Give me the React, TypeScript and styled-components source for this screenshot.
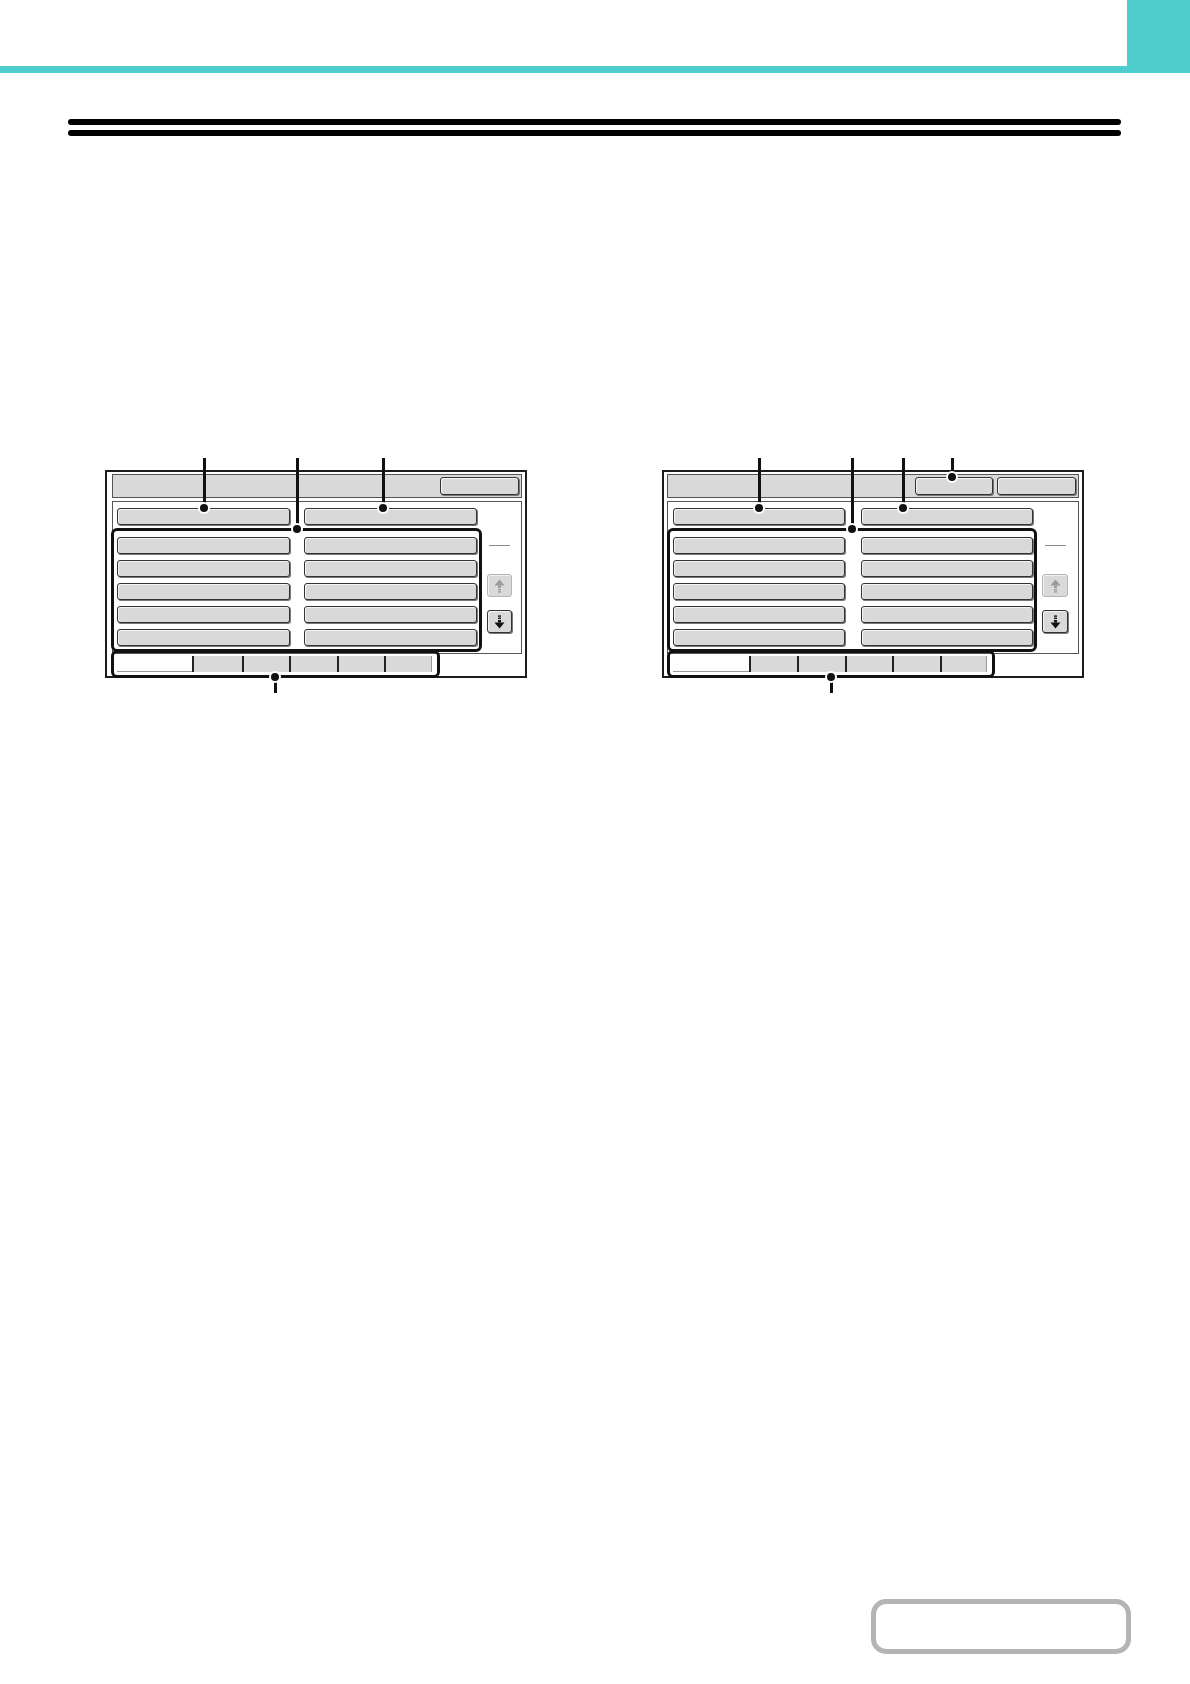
import React from "react";
import styled, { createGlobalStyle, css } from "styled-components";

const TEAL = "#4fcdcd";
const GRAY = "#d9d9d9";

const GlobalStyle = createGlobalStyle`
  html, body { margin: 0; padding: 0; background: #ffffff; }
  body { font-family: "Liberation Sans", Arial, sans-serif; }
  * { box-sizing: border-box; }
`;

const Page = styled.div`
  width: 1190px;
  min-height: 1684px;
  display: flex;
  flex-direction: column;
  background: #ffffff;
`;

const Header = styled.header`
  display: flex;
  height: 73px;
`;

const HeaderMain = styled.div`
  flex: 1;
  border-bottom: 7px solid ${TEAL};
`;

const HeaderTab = styled.div`
  width: 63px;
  background: ${TEAL};
`;

const Rule = styled.div`
  margin: 46px 0 0 68px;
  width: 1053px;
  display: flex;
  flex-direction: column;
  gap: 5px;
`;

const RuleBar = styled.div`
  height: 6px;
  background: #000;
  border-radius: 3px;
`;

const Figures = styled.section`
  display: flex;
  margin-top: 322px;
  padding-left: 105px;
  gap: 135px;
`;

const Figure = styled.figure<{ $w: number }>`
  position: relative;
  margin: 0;
  padding: 12px 0 16px;
  width: ${(p) => p.$w}px;
`;

const Frame = styled.div<{ $padL: number }>`
  height: 208px;
  border: 2px solid #1c1c1c;
  padding: 2px 3px 0 ${(p) => p.$padL}px;
  display: flex;
  flex-direction: column;
`;

const buttonLook = css`
  background: ${GRAY};
  border: 1px solid #333;
  border-radius: 3px;
  box-shadow: inset 1px 1px 0 #f4f4f4, 1px 1px 0 #777;
`;

const TitleBar = styled.div<{ $padR: number }>`
  height: 24px;
  background: ${GRAY};
  border: 1px solid #555;
  display: flex;
  justify-content: flex-end;
  align-items: center;
  gap: 4px;
  padding-right: ${(p) => p.$padR}px;
`;

const TitleButton = styled.div<{ $w: number }>`
  ${buttonLook};
  width: ${(p) => p.$w}px;
  height: 18px;
`;

const Panel = styled.div`
  margin-top: 3px;
  height: 153px;
  border: 1px solid #555;
  display: flex;
  align-items: flex-start;
`;

const MainCol = styled.div`
  padding-top: 6px;
  display: flex;
  flex-direction: column;
`;

const HeaderRow = styled.div<{ $pad: number; $gap: number }>`
  display: flex;
  gap: ${(p) => p.$gap}px;
  padding-left: ${(p) => p.$pad}px;
`;

const KeyButton = styled.div<{ $w: number }>`
  ${buttonLook};
  width: ${(p) => p.$w}px;
  height: 17px;
`;

const ListGroup = styled.div<{ $ml: number; $w: number; $gap: number; $pl: number; $pr: number }>`
  margin: 3px 0 0 ${(p) => p.$ml}px;
  border: 3px solid #111;
  border-radius: 6px;
  padding: 6px ${(p) => p.$pr}px 3px ${(p) => p.$pl}px;
  display: grid;
  grid-template-columns: ${(p) => p.$w}px ${(p) => p.$w}px;
  column-gap: ${(p) => p.$gap}px;
  row-gap: 6px;
`;

const ScrollCol = styled.div<{ $w: number }>`
  margin-left: 5px;
  width: ${(p) => p.$w}px;
  padding-top: 43px;
  display: flex;
  flex-direction: column;
  align-items: center;
`;

const ScrollRule = styled.div`
  width: 21px;
  height: 1px;
  background: #8a8a8a;
`;

const ScrollButton = styled.div<{ $disabled?: boolean; $mt: number }>`
  margin-top: ${(p) => p.$mt}px;
  width: 100%;
  height: 23px;
  border-radius: 3px;
  display: flex;
  align-items: center;
  justify-content: center;
  background: ${GRAY};
  ${(p) =>
    p.$disabled
      ? css`
          border: 1px solid #b5b5b5;
          box-shadow: inset 1px 1px 0 #f2f2f2;
        `
      : css`
          border: 1px solid #333;
          box-shadow: inset 1px 1px 0 #f4f4f4, 1px 1px 0 #777;
        `}
`;

const TabRow = styled.div<{ $ml: number; $ringR: number }>`
  position: relative;
  margin: 2px 0 0 ${(p) => p.$ml}px;
  height: 16px;
  display: flex;
  align-self: flex-start;
  &::after {
    content: "";
    position: absolute;
    left: -6px;
    top: -6px;
    right: -${(p) => p.$ringR}px;
    bottom: -6px;
    border: 3px solid #111;
    border-radius: 6px;
    pointer-events: none;
  }
`;

const Tab = styled.div<{ $w: number; $active?: boolean; $last?: boolean }>`
  width: ${(p) => p.$w}px;
  height: 100%;
  ${(p) =>
    p.$active
      ? css`
          background: #ffffff;
          border-bottom: 1px solid #9a9a9a;
        `
      : css`
          background: ${GRAY};
          border-left: 2px solid #222;
        `}
  ${(p) =>
    p.$last &&
    css`
      border-right: 1px solid #999;
    `}
`;

const Leader = styled.div<{ $x: number; $top: number; $h: number }>`
  position: absolute;
  left: ${(p) => p.$x - 1.5}px;
  top: ${(p) => p.$top}px;
  width: 3px;
  height: ${(p) => p.$h}px;
  background: #111;
`;

const Dot = styled.div<{ $x: number; $y: number }>`
  position: absolute;
  left: ${(p) => p.$x - 4}px;
  top: ${(p) => p.$y - 4}px;
  width: 8px;
  height: 8px;
  border-radius: 50%;
  background: #111;
  box-shadow: 0 0 0 2px #ffffff;
`;

const Footer = styled.footer`
  margin-top: auto;
  padding: 0 59px 30px 0;
  display: flex;
  justify-content: flex-end;
`;

const NavButton = styled.div`
  width: 260px;
  height: 55px;
  border: 5px solid #b4b4b4;
  border-radius: 15px;
  background: #ffffff;
`;

const ArrowIcon: React.FC<{ dir: "up" | "down"; color: string }> = ({ dir, color }) => (
  <svg
    width="11"
    height="14"
    viewBox="0 0 11 14"
    style={{ transform: dir === "down" ? "rotate(180deg)" : undefined }}
  >
    <polygon points="5.5,0.5 10.5,6.5 0.5,6.5" fill={color} />
    <rect x="4" y="6.5" width="3" height="2.5" fill={color} />
    <rect x="4" y="10" width="3" height="1.4" fill={color} />
    <rect x="4" y="12.2" width="3" height="1.4" fill={color} />
  </svg>
);

type Callout = { x: number; dotY: number };

type FigureConfig = {
  width: number;
  framePadL: number;
  titlePadR: number;
  titleButtons: number[];
  headPad: number;
  btnW: number;
  colGap: number;
  listMl: number;
  listPl: number;
  listPr: number;
  scrollW: number;
  tabMl: number;
  tabRingR: number;
  tabs: number[];
  callouts: Callout[];
  bottomX: number;
};

const FIGURES: FigureConfig[] = [
  {
    width: 422,
    framePadL: 5,
    titlePadR: 2,
    titleButtons: [79],
    headPad: 4,
    btnW: 173,
    colGap: 14,
    listMl: -2,
    listPl: 3,
    listPr: 2,
    scrollW: 25,
    tabMl: 5,
    tabRingR: 8,
    tabs: [75, 50, 47, 48, 47, 48],
    callouts: [
      { x: 99, dotY: 50 },
      { x: 192, dotY: 71 },
      { x: 278, dotY: 50 },
    ],
    bottomX: 170,
  },
  {
    width: 422,
    framePadL: 3,
    titlePadR: 2,
    titleButtons: [78, 79],
    headPad: 5,
    btnW: 172,
    colGap: 16,
    listMl: -1,
    listPl: 3,
    listPr: 1,
    scrollW: 26,
    tabMl: 6,
    tabRingR: 8,
    tabs: [76, 48, 48, 47, 48, 47],
    callouts: [
      { x: 97, dotY: 50 },
      { x: 190, dotY: 71 },
      { x: 241, dotY: 50 },
      { x: 290, dotY: 19 },
    ],
    bottomX: 169,
  },
];

const ScreenFigure: React.FC<{ cfg: FigureConfig }> = ({ cfg }) => (
  <Figure $w={cfg.width}>
    <Frame $padL={cfg.framePadL}>
      <TitleBar $padR={cfg.titlePadR}>
        {cfg.titleButtons.map((w, i) => (
          <TitleButton key={i} $w={w} />
        ))}
      </TitleBar>
      <Panel>
        <MainCol>
          <HeaderRow $pad={cfg.headPad} $gap={cfg.colGap}>
            <KeyButton $w={cfg.btnW} />
            <KeyButton $w={cfg.btnW} />
          </HeaderRow>
          <ListGroup $ml={cfg.listMl} $w={cfg.btnW} $gap={cfg.colGap} $pl={cfg.listPl} $pr={cfg.listPr}>
            {Array.from({ length: 10 }).map((_, i) => (
              <KeyButton key={i} $w={cfg.btnW} />
            ))}
          </ListGroup>
        </MainCol>
        <ScrollCol $w={cfg.scrollW}>
          <ScrollRule />
          <ScrollButton $disabled $mt={28}>
            <ArrowIcon dir="up" color="#9a9a9a" />
          </ScrollButton>
          <ScrollButton $mt={13}>
            <ArrowIcon dir="down" color="#111" />
          </ScrollButton>
        </ScrollCol>
      </Panel>
      <TabRow $ml={cfg.tabMl} $ringR={cfg.tabRingR}>
        {cfg.tabs.map((w, i) => (
          <Tab key={i} $w={w} $active={i === 0} $last={i === cfg.tabs.length - 1} />
        ))}
      </TabRow>
    </Frame>
    {cfg.callouts.map((c, i) => (
      <React.Fragment key={i}>
        <Leader $x={c.x} $top={0} $h={c.dotY} />
        <Dot $x={c.x} $y={c.dotY} />
      </React.Fragment>
    ))}
    <Leader $x={cfg.bottomX} $top={219} $h={16} />
    <Dot $x={cfg.bottomX} $y={219} />
  </Figure>
);

export default function App() {
  return (
    <>
      <GlobalStyle />
      <Page>
        <Header>
          <HeaderMain />
          <HeaderTab />
        </Header>
        <Rule>
          <RuleBar />
          <RuleBar />
        </Rule>
        <Figures>
          {FIGURES.map((cfg, i) => (
            <ScreenFigure key={i} cfg={cfg} />
          ))}
        </Figures>
        <Footer>
          <NavButton />
        </Footer>
      </Page>
    </>
  );
}
